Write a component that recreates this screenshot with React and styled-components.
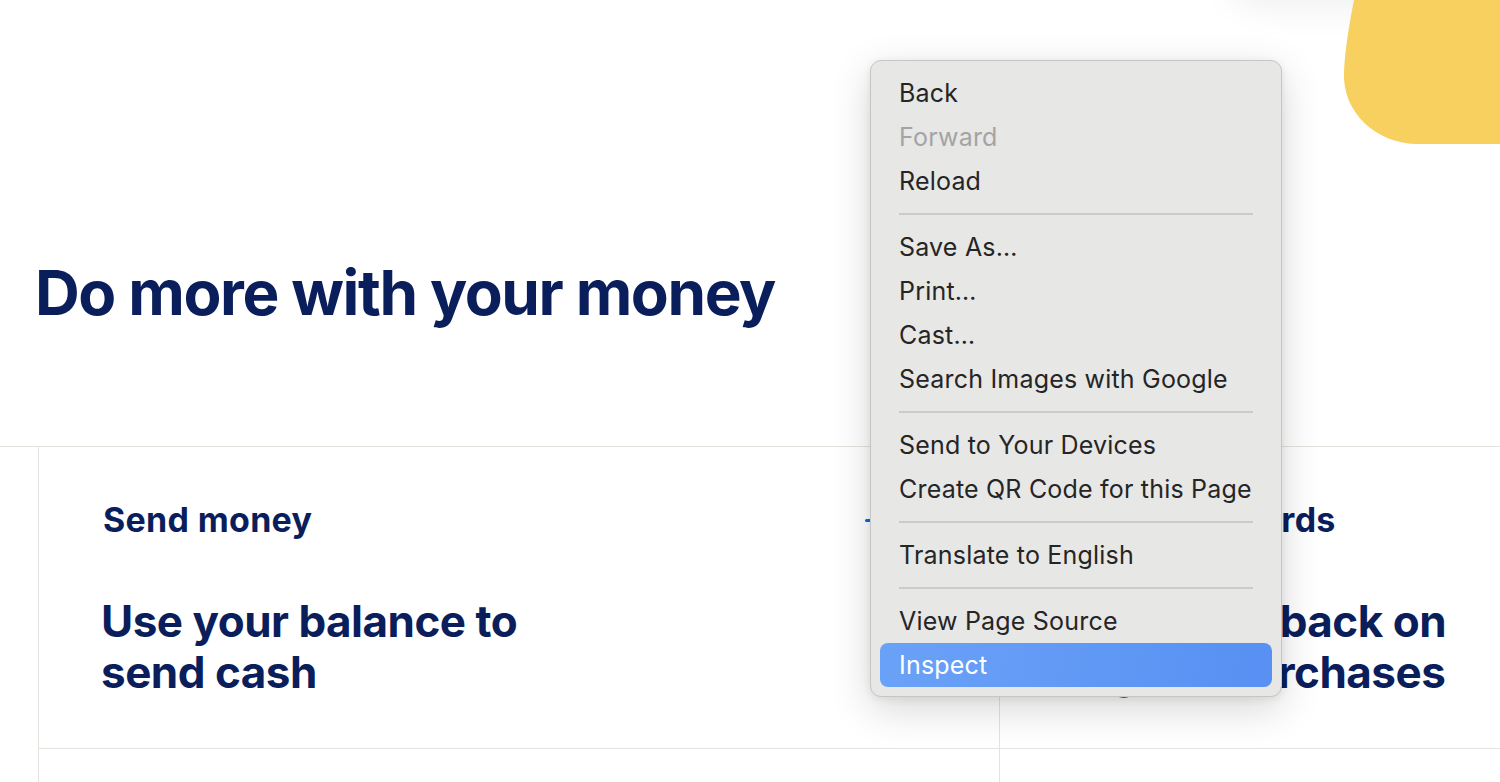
import React from 'react';
import styled, { createGlobalStyle } from 'styled-components';

const GlobalStyle = createGlobalStyle`
  html, body {
    margin: 0;
    padding: 0;
    background: #ffffff;
    overflow: hidden;
  }
  * {
    box-sizing: border-box;
  }
`;

const NAVY = '#0b1e5c';
const LINE = '#e6e2dd';

const StyledPage = styled.main`
  position: relative;
  width: 1500px;
  height: 782px;
  overflow: hidden;
  font-family: Inter, 'Liberation Sans', sans-serif;
  color: ${NAVY};
`;

const StyledHero = styled.header`
  height: 446px;
  padding: 262px 0 0 35px;

  h1 {
    margin: 0;
    font-size: 62px;
    line-height: 1;
    font-weight: 700;
    letter-spacing: -1.4px;
  }
`;

const StyledFeatures = styled.section`
  border-top: 1px solid ${LINE};
  padding-left: 38px;
  display: grid;
  grid-template-columns: 961px 961px;
`;

const StyledCard = styled.article`
  height: 302px;
  border-left: 1px solid ${LINE};
  border-bottom: 1px solid ${LINE};
  padding: 53px 64px 0 64px;
`;

const StyledCardHead = styled.div`
  display: flex;
  align-items: center;
  justify-content: space-between;

  h3 {
    margin: 0;
    font-size: 34px;
    line-height: 1.2;
    font-weight: 700;
    letter-spacing: 0.3px;
  }
`;

const StyledLinkMark = styled.span`
  width: 40px;
  height: 3px;
  margin-right: 30px;
  background: #0070e0;
  border-radius: 2px;
`;

const StyledCardText = styled.p`
  margin: 55px 0 0 -2px;
  font-size: 44px;
  line-height: 51px;
  font-weight: 700;
  letter-spacing: -0.5px;
  max-width: 520px;
`;

const StyledBlob = styled.svg`
  position: absolute;
  top: 0;
  right: 0;
  width: 160px;
  height: 144px;
`;

const StyledTopShade = styled.div`
  position: absolute;
  top: -90px;
  left: 1225px;
  width: 320px;
  height: 90px;
  border-radius: 40px;
  box-shadow: 0 6px 36px rgba(0, 0, 0, 0.07);
  background: #ffffff;
`;

const StyledMenu = styled.nav`
  position: absolute;
  left: 870px;
  top: 60px;
  width: 412px;
  padding: 10px 9px 9px 9px;
  background: #e7e7e6;
  border: 1px solid #c6c6c6;
  border-radius: 11px;
  box-shadow: 0 12px 40px rgba(0, 0, 0, 0.16), 0 2px 8px rgba(0, 0, 0, 0.08);
  font-family: Inter, 'Noto Sans', sans-serif;
`;

const StyledMenuItem = styled.div`
  height: 44px;
  display: flex;
  align-items: center;
  padding-left: 19px;
  border-radius: 8px;
  font-size: 25px;
  letter-spacing: 0.2px;
  white-space: nowrap;
  color: ${({ $disabled, $active }) => ($active ? '#ffffff' : $disabled ? '#a4a4a4' : '#252525')};
  background: ${({ $active }) => ($active ? 'linear-gradient(100deg, #6aa2f8 0%, #5890f3 100%)' : 'transparent')};
`;

const StyledSeparator = styled.div`
  height: 22px;
  display: flex;
  align-items: center;
  padding: 0 19px;

  &::after {
    content: '';
    flex: 1;
    height: 2px;
    background: #cbcbca;
  }
`;

const menuGroups = [
  [{ label: 'Back' }, { label: 'Forward', disabled: true }, { label: 'Reload' }],
  [{ label: 'Save As…' }, { label: 'Print…' }, { label: 'Cast…' }, { label: 'Search Images with Google' }],
  [{ label: 'Send to Your Devices' }, { label: 'Create QR Code for this Page' }],
  [{ label: 'Translate to English' }],
  [{ label: 'View Page Source' }, { label: 'Inspect', active: true }],
];

const features = [
  { title: 'Send money', text: 'Use your balance to send cash', link: true },
  { title: 'Shop with cards', text: 'Earn cash back on eligible purchases' },
];

const ContextMenu = () => (
  <StyledMenu>
    {menuGroups.map((group, i) => (
      <React.Fragment key={i}>
        {i > 0 && <StyledSeparator />}
        {group.map(item => (
          <StyledMenuItem key={item.label} $disabled={item.disabled} $active={item.active}>
            {item.label}
          </StyledMenuItem>
        ))}
      </React.Fragment>
    ))}
  </StyledMenu>
);

const App = () => {
  return (
    <>
      <GlobalStyle />
      <StyledPage>
        <StyledTopShade />
        <StyledBlob viewBox="0 0 160 144">
          <path d="M14 0 H160 V144 H78 C36 144 2 112 4 72 C5 50 9 25 14 0 Z" fill="#f7d05f" />
        </StyledBlob>

        <StyledHero>
          <h1>Do more with your money</h1>
        </StyledHero>

        <StyledFeatures>
          {features.map(f => (
            <StyledCard key={f.title}>
              <StyledCardHead>
                <h3>{f.title}</h3>
                {f.link && <StyledLinkMark />}
              </StyledCardHead>
              <StyledCardText>{f.text}</StyledCardText>
            </StyledCard>
          ))}
          {/* next row starts below the fold */}
          <StyledCard />
          <StyledCard />
        </StyledFeatures>

        <ContextMenu />
      </StyledPage>
    </>
  );
};

export default App;
